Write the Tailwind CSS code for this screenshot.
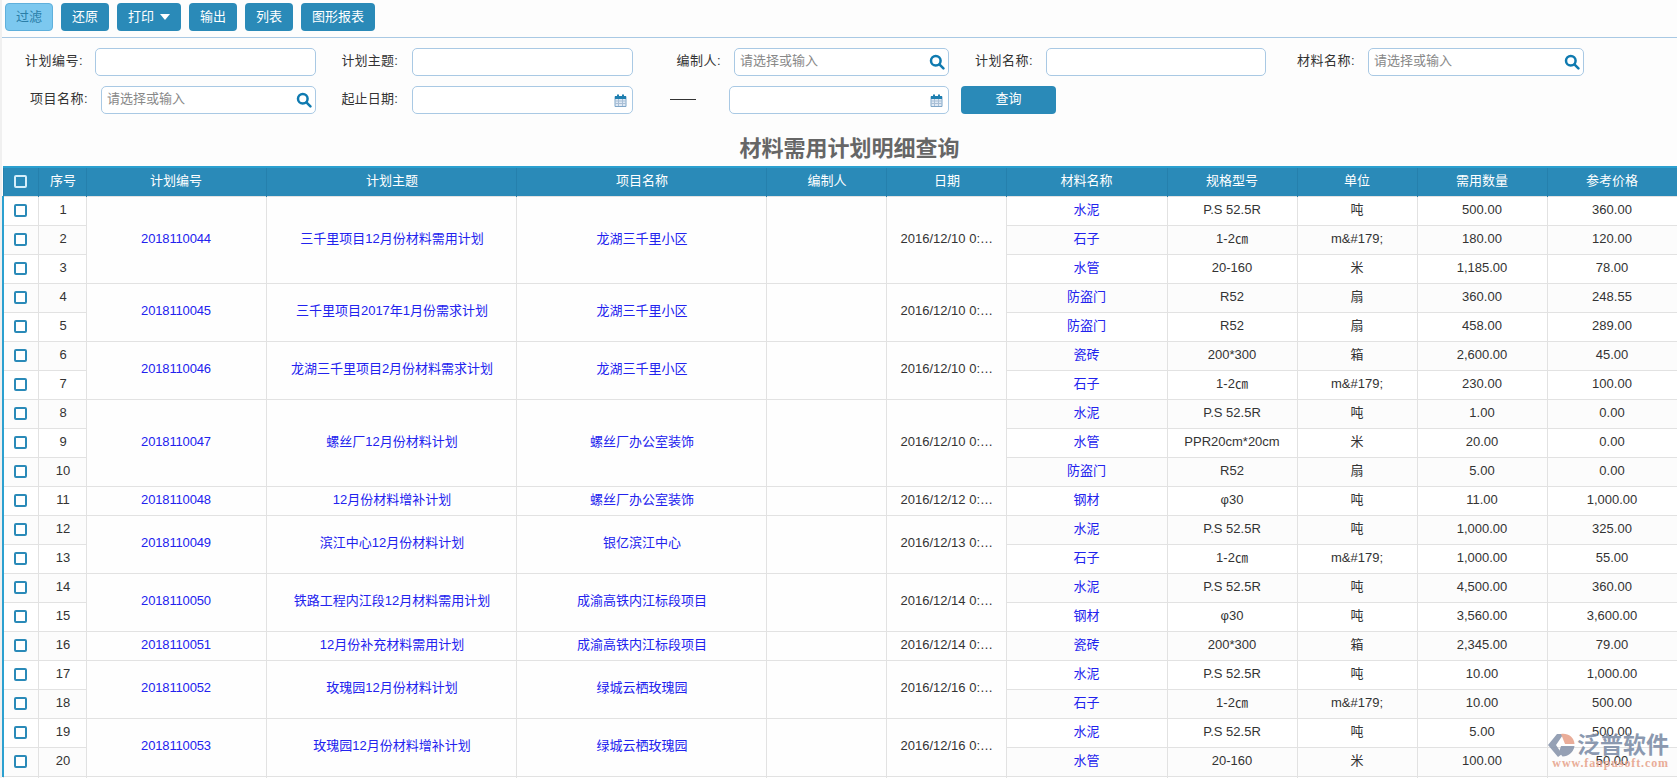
<!DOCTYPE html>
<html lang="zh">
  <head>
    <meta charset="UTF-8" />
    <title>材料需用计划明细查询</title>
    <script src="https://cdn.jsdelivr.net/npm/@tailwindcss/browser@4"></script>
  </head>
  <body class="h-[778px] overflow-hidden bg-[#fdfdfd] text-[13px] text-[#333] font-['Liberation_Sans','Noto_Sans_CJK_SC',sans-serif]">
    <div class="relative h-full border-l-2 border-[#f0f0f0]">
      <!-- toolbar -->
      <div class="flex h-[38px] items-center gap-2 border-b border-[#a9c9e4] pb-[3px] pl-[3px]">
        <button class="h-7 w-12 rounded border border-[#5fb0dc] bg-[#7cc8ef] text-[#2a7ea8]">过滤</button>
        <button class="h-7 w-12 rounded bg-[#2a8ab8] text-white">还原</button>
        <button class="flex h-7 w-16 items-center justify-center gap-1.5 rounded bg-[#2a8ab8] text-white">打印<span class="h-0 w-0 border-x-[5px] border-t-[6px] border-x-transparent border-t-white"></span></button>
        <button class="h-7 w-12 rounded bg-[#2a8ab8] text-white">输出</button>
        <button class="h-7 w-12 rounded bg-[#2a8ab8] text-white">列表</button>
        <button class="h-7 w-[74px] rounded bg-[#2a8ab8] text-white">图形报表</button>
      </div>

      <!-- filters -->
      <div class="flex h-7 mt-2.5 -ml-0.5">
        <div class="flex w-[316px] items-center justify-end gap-[12px]"><span class="pb-0.5 tracking-[0.5px]">计划编号:</span><input class="h-7 w-[221px] rounded-[5px] border border-[#a9c9e4] bg-white" /></div>
        <div class="flex w-[317px] items-center justify-end gap-[14px]"><span class="pb-0.5 tracking-[0.2px]">计划主题:</span><input class="h-7 w-[221px] rounded-[5px] border border-[#a9c9e4] bg-white" /></div>
        <div class="flex w-[316px] items-center justify-end gap-[13px]"><span class="pb-0.5 tracking-[0.5px]">编制人:</span>
          <div class="flex h-7 w-[215px] items-center justify-between rounded-[5px] border border-[#a9c9e4] bg-white pl-[5px] pr-[3px] text-[#888]"><span class="pb-0.5">请选择或输入</span>
            <svg class="size-4" viewBox="0 0 16 16" fill="none" stroke="#0f7ab0" stroke-width="2.5"><circle cx="6.8" cy="6.8" r="4.8"/><path d="M10.4 10.4l4 4" stroke-linecap="round"/></svg>
          </div>
        </div>
        <div class="flex w-[317px] items-center justify-end gap-[13px]"><span class="pb-0.5 tracking-[0.5px]">计划名称:</span><input class="h-7 w-[220px] rounded-[5px] border border-[#a9c9e4] bg-white" /></div>
        <div class="flex w-[318px] items-center justify-end gap-[13px]"><span class="pb-0.5 tracking-[0.5px]">材料名称:</span>
          <div class="flex h-7 w-[216px] items-center justify-between rounded-[5px] border border-[#a9c9e4] bg-white pl-[5px] pr-[3px] text-[#888]"><span class="pb-0.5">请选择或输入</span>
            <svg class="size-4" viewBox="0 0 16 16" fill="none" stroke="#0f7ab0" stroke-width="2.5"><circle cx="6.8" cy="6.8" r="4.8"/><path d="M10.4 10.4l4 4" stroke-linecap="round"/></svg>
          </div>
        </div>
      </div>
      <div class="mt-2.5 flex h-7 -ml-0.5">
        <div class="flex w-[316px] items-center justify-end gap-[13px]"><span class="pb-0.5 tracking-[0.5px]">项目名称:</span>
          <div class="flex h-7 w-[215px] items-center justify-between rounded-[5px] border border-[#a9c9e4] bg-white pl-[5px] pr-[3px] text-[#888]"><span class="pb-0.5">请选择或输入</span>
            <svg class="size-4" viewBox="0 0 16 16" fill="none" stroke="#0f7ab0" stroke-width="2.5"><circle cx="6.8" cy="6.8" r="4.8"/><path d="M10.4 10.4l4 4" stroke-linecap="round"/></svg>
          </div>
        </div>
        <div class="flex w-[317px] items-center justify-end gap-[14px]"><span class="pb-0.5 tracking-[0.2px]">起止日期:</span>
          <div class="flex h-7 w-[221px] items-center justify-end rounded-[5px] border border-[#a9c9e4] bg-white pr-[5px]">
            <svg class="size-[13px]" viewBox="0 0 13 13"><path fill="#dfe9f4" stroke="#7fa6c8" d="M1 2.500h11v10H1z"/><path stroke="#a9bfd6" d="M4.500 5v7M8.500 5v7M1 7h11M1 9.500h11"/><path fill="#1f7fb0" d="M1 2h11v3H1zM3 .5h2v3H3zM8 .5h2v3H8z"/></svg>
          </div>
        </div>
        <div class="ml-[37px] -mt-[2px] h-px w-[26px] self-center bg-[#333]"></div>
        <div class="ml-[33px] flex h-7 w-[220px] items-center justify-end rounded-[5px] border border-[#a9c9e4] bg-white pr-[5px]">
          <svg class="size-[13px]" viewBox="0 0 13 13"><path fill="#dfe9f4" stroke="#7fa6c8" d="M1 2.500h11v10H1z"/><path stroke="#a9bfd6" d="M4.500 5v7M8.500 5v7M1 7h11M1 9.500h11"/><path fill="#1f7fb0" d="M1 2h11v3H1zM3 .5h2v3H3zM8 .5h2v3H8z"/></svg>
        </div>
        <button class="ml-3 h-7 w-[95px] rounded bg-[#2a8ab8] pb-0.5 text-white">查询</button>
      </div>

      <h1 class="mt-[18px] h-[34px] pl-5 text-center text-[22px]/[34px] font-bold text-[#666]">材料需用计划明细查询</h1>

      <table class="w-[1674px] table-fixed border-collapse">
        <colgroup>
          <col class="w-[35px]" /><col class="w-[48px]" /><col class="w-[180px]" /><col class="w-[250px]" /><col class="w-[250px]" /><col class="w-[120px]" /><col class="w-[120px]" /><col class="w-[161px]" /><col class="w-[130px]" /><col class="w-[120px]" /><col class="w-[130px]" /><col class="w-[130px]" />
        </colgroup>
        <thead>
          <tr class="h-[29px] border-t-2 border-[#2ba0d0] bg-[#2a8ab8] font-normal text-white">
            <th class="border-x border-[#2580ad] font-normal"><span class="mx-auto block size-[13px] rounded-[2px] border-2 border-[#d5eefa] bg-[#2a8ab8]"></span></th>
            <th class="border-x border-[#2580ad] pb-[2px] pl-[2px] font-normal">序号</th>
            <th class="border-x border-[#2580ad] pb-[2px] font-normal">计划编号</th>
            <th class="border-x border-[#2580ad] pb-[2px] pl-[2px] font-normal">计划主题</th>
            <th class="border-x border-[#2580ad] pb-[2px] pl-[2px] font-normal">项目名称</th>
            <th class="border-x border-[#2580ad] pb-[2px] pl-[2px] font-normal">编制人</th>
            <th class="border-x border-[#2580ad] pb-[2px] pl-[2px] font-normal">日期</th>
            <th class="border-x border-[#2580ad] pb-[2px] font-normal">材料名称</th>
            <th class="border-x border-[#2580ad] pb-[2px] font-normal">规格型号</th>
            <th class="border-x border-[#2580ad] pb-[2px] font-normal">单位</th>
            <th class="border-x border-[#2580ad] pb-[2px] font-normal">需用数量</th>
            <th class="border-x border-[#2580ad] pb-[2px] font-normal">参考价格</th>
          </tr>
        </thead>
        <tbody id="rows"></tbody>
      </table>

      <!-- watermark -->
      <div class="absolute bottom-[10px] right-[8px] flex flex-col items-end opacity-90">
        <div class="flex items-center gap-0.5">
          <svg class="h-[24px] w-[27px]" viewBox="0 0 27 24">
            <path fill="#8a97ad" d="M0 12L9 1h6.500L8 12l6 9-4 3z"/>
            <path fill="#e8a58e" d="M13 1c7-1 13 3 13.500 10H17z"/>
            <path fill="#8a97ad" d="M13 13h13.500c-1 6-6 10.500-12 10.500L11 19z"/>
          </svg>
          <span class="text-[23px]/[24px] font-bold text-[#7f8fa8]">泛普软件</span>
        </div>
        <span class="mt-px text-[12px]/[10px] font-bold tracking-[0.9px] text-[#e8a58e] font-['Liberation_Serif',serif]">www.fanpusoft.com</span>
      </div>
    </div>

    <script>
      const cem = ["水泥", "P.S 52.5R", "吨"];
      const stone = ["石子", "1-2㎝", "m&amp;#179;"];
      const pipe = ["水管", "20-160", "米"];
      const door = ["防盗门", "R52", "扇"];
      const tile = ["瓷砖", "200*300", "箱"];
      const steel = ["钢材", "φ30", "吨"];

      const groups = [
        ["2018110044", "三千里项目12月份材料需用计划", "龙湖三千里小区", "10", [[cem, "500.00", "360.00"], [stone, "180.00", "120.00"], [pipe, "1,185.00", "78.00"]]],
        ["2018110045", "三千里项目2017年1月份需求计划", "龙湖三千里小区", "10", [[door, "360.00", "248.55"], [door, "458.00", "289.00"]]],
        ["2018110046", "龙湖三千里项目2月份材料需求计划", "龙湖三千里小区", "10", [[tile, "2,600.00", "45.00"], [stone, "230.00", "100.00"]]],
        ["2018110047", "螺丝厂12月份材料计划", "螺丝厂办公室装饰", "10", [[cem, "1.00", "0.00"], [["水管", "PPR20cm*20cm", "米"], "20.00", "0.00"], [door, "5.00", "0.00"]]],
        ["2018110048", "12月份材料增补计划", "螺丝厂办公室装饰", "12", [[steel, "11.00", "1,000.00"]]],
        ["2018110049", "滨江中心12月份材料计划", "银亿滨江中心", "13", [[cem, "1,000.00", "325.00"], [stone, "1,000.00", "55.00"]]],
        ["2018110050", "铁路工程内江段12月材料需用计划", "成渝高铁内江标段项目", "14", [[cem, "4,500.00", "360.00"], [steel, "3,560.00", "3,600.00"]]],
        ["2018110051", "12月份补充材料需用计划", "成渝高铁内江标段项目", "14", [[tile, "2,345.00", "79.00"]]],
        ["2018110052", "玫瑰园12月份材料计划", "绿城云栖玫瑰园", "16", [[cem, "10.00", "1,000.00"], [stone, "10.00", "500.00"]]],
        ["2018110053", "玫瑰园12月份材料增补计划", "绿城云栖玫瑰园", "16", [[cem, "5.00", "500.00"], [pipe, "100.00", "50.00"]]],
      ];

      const td = "border border-[#e2e2e2] pb-[2px] text-center truncate";
      let html = "";
      let no = 0;
      groups.forEach((g) => {
        g[4].forEach((r, i) => {
          no++;
          const bg = no % 2 === 0 ? "bg-[#fcfcfc]" : "bg-white";
          html += `<tr class="h-[29px] ${bg}">`;
          html += `<td class="border border-[#e2e2e2] border-l-2 border-l-[#2ba0d0]"><span class="mx-auto block size-[13px] rounded-[2px] border-2 border-[#2a8ab8] bg-white"></span></td>`;
          html += `<td class="${td} pl-[2px]">${no}</td>`;
          if (i === 0) {
            const n = g[4].length;
            html += `<td rowspan="${n}" class="${td} bg-[#fefefe] tracking-[-0.15px] text-[#2222ee]">${g[0]}</td>`;
            html += `<td rowspan="${n}" class="${td} bg-[#fefefe] pl-[2px] text-[#2222ee]">${g[1]}</td>`;
            html += `<td rowspan="${n}" class="${td} bg-[#fefefe] pl-[2px] text-[#2222ee]">${g[2]}</td>`;
            html += `<td rowspan="${n}" class="${td} bg-[#fefefe]"></td>`;
            html += `<td rowspan="${n}" class="${td} bg-[#fefefe] pl-3.5 pr-2.5">2016/12/${g[3]} 0:00:00</td>`;
          }
          html += `<td class="${td} text-[#2222ee]">${r[0][0]}</td>`;
          html += `<td class="${td}">${r[0][1]}</td>`;
          html += `<td class="${td}">${r[0][2]}</td>`;
          html += `<td class="${td}">${r[1]}</td>`;
          html += `<td class="${td}">${r[2]}</td>`;
          html += `</tr>`;
        });
      });
      html += `<tr class="h-[29px] bg-white">` + `<td class="${td}"></td>`.repeat(12) + `</tr>`;
      document.getElementById("rows").innerHTML = html;
    </script>
  </body>
</html>
